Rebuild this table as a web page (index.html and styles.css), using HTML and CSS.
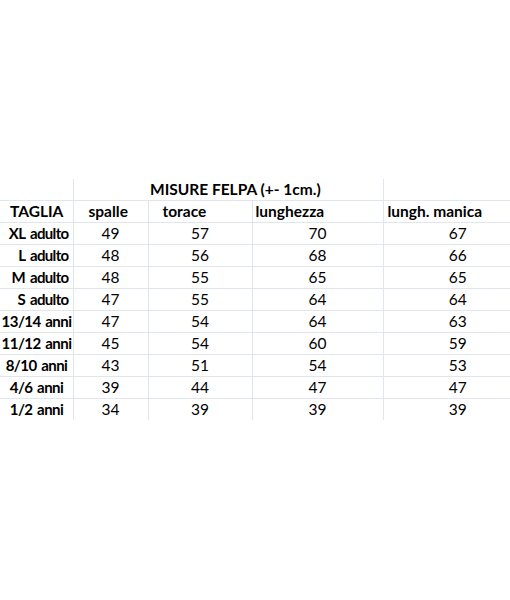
FILE: index.html
```html
<!DOCTYPE html>
<html lang="it">
<head>
<meta charset="utf-8">
<title>Misure felpa</title>
<link rel="stylesheet" href="styles.css">
</head>
<body>
<div class="sheet">
  <table class="grid">
    <colgroup>
      <col class="c-a"><col class="c-b"><col class="c-c"><col class="c-d"><col class="c-e">
    </colgroup>
    <tr class="title-row">
      <td class="size"></td>
      <td class="blank"></td>
      <td class="title" colspan="2"><span>MISURE FELPA (+- 1cm.)</span></td>
      <td class="last"></td>
    </tr>
    <tr class="head-row">
      <td class="size head-taglia">TAGLIA</td>
      <td class="head h-b">spalle</td>
      <td class="head h-c">torace</td>
      <td class="head h-d">lunghezza</td>
      <td class="head h-e last">lungh. manica</td>
    </tr>
    <tr><td class="size adult">XL adulto</td><td class="num">49</td><td class="num">57</td><td class="num">70</td><td class="num last">67</td></tr>
    <tr><td class="size adult">L adulto</td><td class="num">48</td><td class="num">56</td><td class="num">68</td><td class="num last">66</td></tr>
    <tr><td class="size adult">M adulto</td><td class="num">48</td><td class="num">55</td><td class="num">65</td><td class="num last">65</td></tr>
    <tr><td class="size adult">S adulto</td><td class="num">47</td><td class="num">55</td><td class="num">64</td><td class="num last">64</td></tr>
    <tr><td class="size kid"><div class="ctr">13/14 anni</div></td><td class="num">47</td><td class="num">54</td><td class="num">64</td><td class="num last">63</td></tr>
    <tr><td class="size kid"><div class="ctr">11/12 anni</div></td><td class="num">45</td><td class="num">54</td><td class="num">60</td><td class="num last">59</td></tr>
    <tr><td class="size kid"><div class="ctr">8/10 anni</div></td><td class="num">43</td><td class="num">51</td><td class="num">54</td><td class="num last">53</td></tr>
    <tr><td class="size kid"><div class="ctr">4/6 anni</div></td><td class="num">39</td><td class="num">44</td><td class="num">47</td><td class="num last">47</td></tr>
    <tr class="final"><td class="size kid"><div class="ctr">1/2 anni</div></td><td class="num">34</td><td class="num">39</td><td class="num">39</td><td class="num last">39</td></tr>
  </table>
</div>
</body>
</html>
```
FILE: styles.css
```css
html, body {
  margin: 0;
  padding: 0;
  background: #ffffff;
  overflow: hidden;
}
.sheet {
  width: 510px;
  height: 600px;
  overflow: hidden;
  padding-top: 179px;
  box-sizing: border-box;
}
.grid {
  border-collapse: collapse;
  table-layout: fixed;
  width: 532px;
  font-family: Lato, "Open Sans", "Liberation Sans", sans-serif;
  font-size: 15.5px;
  color: #000000;
}
.c-a { width: 73px; }
.c-b { width: 75px; }
.c-c { width: 104px; }
.c-d { width: 131px; }
.c-e { width: 149px; }
.grid td {
  height: 21px;
  padding: 0;
  border-right: 1px solid #e1e5ed;
  border-bottom: 1px solid #e1e5ed;
  white-space: nowrap;
  line-height: 21px;
  overflow: visible;
}
.grid td.last { border-right: none; }
.grid tr.final td { border-bottom: none; }
.grid td.blank { border-right: none; }
.title { font-weight: 700; padding-left: 2px !important; }
.title-row td.size { border-bottom: 1px solid #e1e5ed; }
.size { font-weight: 700; }
.head { font-weight: 700; }
.head-taglia { padding-left: 10px !important; }
.h-b { padding-left: 15px !important; }
.h-c { padding-left: 14px !important; }
.h-d { padding-left: 3px !important; }
.h-e { padding-left: 4px !important; }
.adult {
  text-align: right;
  padding-right: 4px !important;
  font-size: 15px;
  letter-spacing: -0.65px;
  word-spacing: 2px;
}
.kid .ctr {
  display: flex;
  justify-content: center;
  width: 73px;
  font-size: 15px;
  letter-spacing: -0.55px;
  word-spacing: 1.5px;
}
.num { text-align: center; }
```
